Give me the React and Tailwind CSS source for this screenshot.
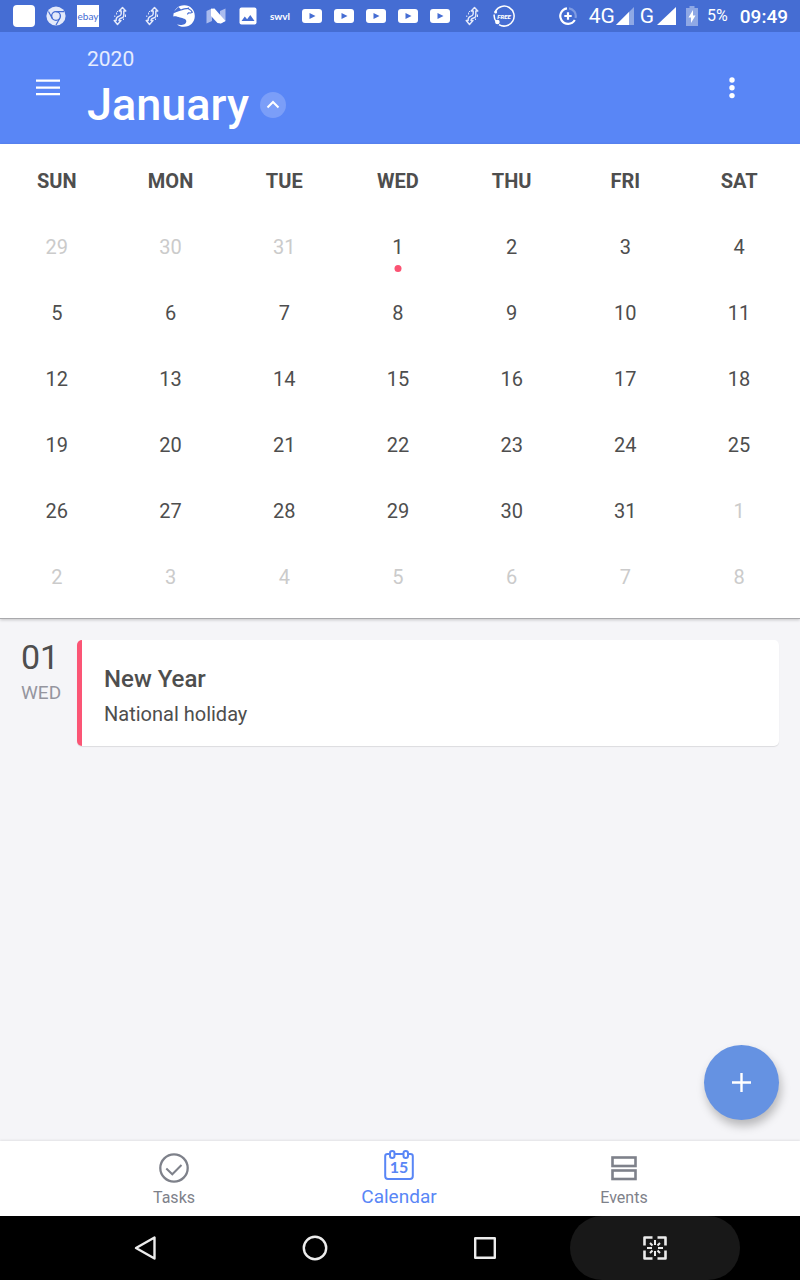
import React from "react";

const WEEKDAYS = ["SUN", "MON", "TUE", "WED", "THU", "FRI", "SAT"];
const WEEKS = [
  [29, 30, 31, 1, 2, 3, 4],
  [5, 6, 7, 8, 9, 10, 11],
  [12, 13, 14, 15, 16, 17, 18],
  [19, 20, 21, 22, 23, 24, 25],
  [26, 27, 28, 29, 30, 31, 1],
  [2, 3, 4, 5, 6, 7, 8],
];

function isOutside(week, day) {
  return (week === 0 && day > 20) || (week > 3 && day < 20);
}

function Slot({ children }) {
  return <span className="flex h-8 w-8 shrink-0 items-center justify-center">{children}</span>;
}

function ChromeIcon() {
  return (
    <svg width="20" height="20" viewBox="0 0 20 20" aria-hidden="true">
      <circle cx="10" cy="10" r="9.6" fill="#e3e9fa" />
      <circle cx="10" cy="10" r="4.4" fill="#e3e9fa" stroke="#456dd3" strokeWidth="1.4" />
      <path d="M10 5.600H18M6.200 12.200L2.500 5.500M13.800 12.200L10 19" stroke="#456dd3" strokeWidth="1.2" fill="none" />
    </svg>
  );
}

function TransferIcon() {
  return (
    <svg width="14" height="20" viewBox="0 0 14 20" fill="none" stroke="#e4eafb" strokeWidth="1.400" strokeLinejoin="round" aria-hidden="true">
      <path d="M9.500 1.500L12.800 5H10.800V9.500Q10.800 11.500 8.500 12T6 14V14.500H8L4.500 18.500L1.200 14.500H3.200V13.500Q3.200 11 5.600 10.300T8.200 8V5H6.200z" />
      <path d="M3.600 6.500v2M1.800 9.500v1.500M10.500 12.500v1.500M12.500 8.500v2.500M4.500 5v1" strokeWidth="1" />
    </svg>
  );
}

function CatIcon() {
  return (
    <svg width="22" height="22" viewBox="0 0 22 22" aria-hidden="true">
      <path d="M0.300 11.500C0.300 5 5 .2 11.300.2C17.500.2 21.800 5 21.800 11C21.800 17 17.200 21.800 11 21.800C8 21.800 5.800 21 4 19.500C8 20.500 13 20 13.300 16.500C13.500 13.800 10 13.500 7 12.600C4.500 11.800 2.500 10.800.3 11.500z" fill="#fff" />
      <path d="M1 7.500C3.500 5.800 6 5.600 9 4.600C11 3.800 12.600 3.400 14.200 3.700L15.300 3L16 4.300C17.500 4.900 18.600 5.800 19.300 7.200L17.800 8L15.500 7.800L14.300 9.300" fill="none" stroke="#456dd3" strokeWidth="1.200" />
      <path d="M0 7.500L5.500 2L8 4.500L2.500 7z" fill="#456dd3" />
    </svg>
  );
}

function NIcon() {
  return (
    <svg width="20" height="16" viewBox="0 0 20 16" aria-hidden="true">
      <path d="M0.500 3L6 0.500V13L0.500 15.500zM14 3L19.500 0.500V13L14 15.500z" fill="#a9bbee" />
      <path d="M5 0.800L8.500 0.500L19.500 13L15 15.500L11.500 15L5 8z" fill="#fff" />
    </svg>
  );
}

function PictureIcon() {
  return (
    <svg width="18" height="18" viewBox="0 0 18 18" aria-hidden="true">
      <rect x="0.500" y="0.500" width="17" height="17" rx="2" fill="#fff" />
      <path d="M2.500 14l3.300-4.500 2.300 2.700 3.200-4.300L15.500 14z" fill="#456dd3" />
    </svg>
  );
}

function VideoIcon() {
  return (
    <svg width="20" height="14" viewBox="0 0 20 14" aria-hidden="true">
      <rect width="20" height="14" rx="3" fill="#fff" />
      <path d="M7.500 4l6 3-6 3z" fill="#456dd3" />
    </svg>
  );
}

function FreeIcon() {
  return (
    <svg width="22" height="22" viewBox="0 0 22 22" fill="none" stroke="#fff" strokeWidth="1.500" aria-hidden="true">
      <path d="M2.500 6A10 10 0 1 1 6 19.700M1.200 9.500A10 10 0 0 0 3.500 17" />
      <circle cx="2.600" cy="7" r="1.500" fill="#fff" stroke="none" />
      <circle cx="4.400" cy="17" r="2.300" fill="#fff" stroke="none" />
      <text x="11" y="13.500" textAnchor="middle" fill="#fff" stroke="none" fontFamily="Roboto, sans-serif" fontSize="6" fontStyle="italic" fontWeight="900">FREE</text>
    </svg>
  );
}

function StatusBar() {
  return (
    <div className="flex h-8 items-center justify-between overflow-hidden bg-[#456dd3] pl-2 pr-3 text-white">
      <div className="flex">
        <Slot><span className="h-[22px] w-[22px] rounded bg-white" /></Slot>
        <Slot><ChromeIcon /></Slot>
        <Slot>
          <span className="flex h-[22px] w-[22px] items-center justify-center bg-white font-[Lato,sans-serif] text-[10px] leading-none text-[#456dd3]">ebay</span>
        </Slot>
        <Slot><TransferIcon /></Slot>
        <Slot><TransferIcon /></Slot>
        <Slot><CatIcon /></Slot>
        <Slot><NIcon /></Slot>
        <Slot><PictureIcon /></Slot>
        <Slot><span className="font-[Lato,sans-serif] text-[10px] font-bold leading-none">swvl</span></Slot>
        <Slot><VideoIcon /></Slot>
        <Slot><VideoIcon /></Slot>
        <Slot><VideoIcon /></Slot>
        <Slot><VideoIcon /></Slot>
        <Slot><VideoIcon /></Slot>
        <Slot><TransferIcon /></Slot>
        <Slot><FreeIcon /></Slot>
      </div>
      <div className="flex items-center leading-none">
        <svg className="mr-3" width="18" height="18" viewBox="0 0 18 18" fill="none" strokeWidth="2.200" aria-hidden="true">
          <path d="M10 1.300A7.800 7.800 0 0 1 16.500 11" stroke="#7f9be2" />
          <path d="M8 1.300A7.800 7.800 0 1 0 15.800 13" stroke="#fff" />
          <path d="M9 5.300v7.400M5.300 9h7.400" stroke="#fff" />
        </svg>
        <span className="mr-px text-[21px] leading-none">4G</span>
        <svg className="mr-[6px]" width="18" height="18" viewBox="0 0 18 18" aria-hidden="true">
          <path d="M0 18L18 0v18z" fill="#8fa8e5" />
          <path d="M0 18L13 5v13z" fill="#fff" />
        </svg>
        <span className="mr-[3px] text-[21px] leading-none">G</span>
        <svg className="mr-[10px]" width="19" height="18" viewBox="0 0 19 18" aria-hidden="true">
          <path d="M0 18L19 0v18z" fill="#fff" />
        </svg>
        <svg className="mr-[9px]" width="12" height="20" viewBox="0 0 12 20" aria-hidden="true">
          <path d="M0 2h3.500V0h5v2H12v18H0z" fill="#8fa8e5" />
          <path d="M7 4L2.500 11.500H5V17l4.500-7.500H7z" fill="#fff" />
        </svg>
        <span className="mr-3 text-base leading-none">5%</span>
        <span className="text-[19px] font-medium leading-none">09:49</span>
      </div>
    </div>
  );
}

function Header() {
  return (
    <header className="flex h-28 bg-[#5986f6] pl-9 pr-14 text-white">
      <button type="button" aria-label="Open menu" className="mt-11 h-6 w-6">
        <svg width="24" height="24" viewBox="0 0 24 24" fill="#fff" aria-hidden="true">
          <path d="M0 3.500h24v2.200H0zM0 10.500h24v2.200H0zM0 17h24v2.200H0z" />
        </svg>
      </button>
      <div className="ml-[27px] flex-1 pt-[14px]">
        <p className="text-[21px] leading-[26px] text-white/85">2020</p>
        <div className="mt-[5px] flex items-center gap-[11px]">
          <h1 className="text-[45px] font-medium leading-[56px]">January</h1>
          <button type="button" aria-label="Collapse month" className="flex h-[26px] w-[26px] items-center justify-center rounded-full bg-[#7b9ef8]">
            <svg width="14" height="14" viewBox="0 0 14 14" fill="none" stroke="#fff" strokeWidth="2" aria-hidden="true">
              <path d="M1.500 9.500L7 4l5.500 5.500" />
            </svg>
          </button>
        </div>
      </div>
      <button type="button" aria-label="More options" className="mt-11 flex h-6 w-6 items-center justify-center">
        <svg width="6" height="22" viewBox="0 0 6 22" fill="#fff" aria-hidden="true">
          <circle cx="3" cy="3" r="2.700" />
          <circle cx="3" cy="10.800" r="2.700" />
          <circle cx="3" cy="18.600" r="2.700" />
        </svg>
      </button>
    </header>
  );
}

function MonthGrid() {
  return (
    <section aria-label="January 2020" className="z-10 border-b border-[#a9a9ac] bg-white pb-2 pr-1 pt-1 shadow-[0_1px_3px_rgba(0,0,0,0.2)]">
      <table className="w-full table-fixed border-collapse text-center text-xl text-[#4e4e4e]">
        <thead>
          <tr className="h-[66px]">
            {WEEKDAYS.map((name) => (
              <th key={name} scope="col" className="p-0 font-bold">{name}</th>
            ))}
          </tr>
        </thead>
        <tbody>
          {WEEKS.map((days, week) => (
            <tr key={week} className="h-[66px]">
              {days.map((day) => (
                <td key={day} className={isOutside(week, day) ? "p-0 text-[#cbcbcb]" : "p-0"}>
                  <button type="button" className="relative h-11 w-11">
                    {day}
                    {week === 0 && day === 1 && (
                      <span className="absolute bottom-[-3px] left-1/2 h-[7px] w-[7px] -translate-x-1/2 rounded-full bg-[#fb5373]" />
                    )}
                  </button>
                </td>
              ))}
            </tr>
          ))}
        </tbody>
      </table>
    </section>
  );
}

function Agenda() {
  return (
    <main className="relative flex-1 bg-[#f5f5f8] px-[21px] pt-[21px]">
      <article className="flex">
        <div className="w-14">
          <p className="text-[34px] leading-[34px] text-[#4e4e4e]">01</p>
          <p className="mt-[6px] text-[19px] leading-[26px] text-[#95959f]">WED</p>
        </div>
        <div className="flex-1 rounded-[5px] border-l-[5px] border-[#fb5575] bg-white pb-[19px] pl-[22px] pt-6 text-[#4e4e4e] shadow-[0_1px_1px_rgba(0,0,0,0.1)]">
          <h2 className="text-2xl font-medium leading-[30px]">New Year</h2>
          <p className="mt-[7px] text-xl leading-[26px]">National holiday</p>
        </div>
      </article>
      <button type="button" aria-label="Add event" className="absolute bottom-[21px] right-[21px] flex h-[75px] w-[75px] items-center justify-center rounded-full bg-[#6592e2] shadow-[2px_6px_10px_rgba(0,0,0,0.25)]">
        <svg width="20" height="20" viewBox="0 0 20 20" stroke="#fff" strokeWidth="2.400" aria-hidden="true">
          <path d="M9.500 0v19M0 9.500h19" />
        </svg>
      </button>
    </main>
  );
}

function TabBar() {
  return (
    <nav aria-label="Sections" className="relative flex h-[75px] justify-center bg-white pr-[2px] text-[#7e818a] shadow-[0_-1px_2px_rgba(0,0,0,0.08)]">
      <a href="#tasks" className="flex w-[225px] flex-col items-center pt-3">
        <svg width="30" height="30" viewBox="0 0 30 30" fill="none" stroke="currentColor" aria-hidden="true">
          <circle cx="15" cy="15" r="13.700" strokeWidth="2.300" />
          <path d="M7.300 15.500l6 5.800L22.500 12" strokeWidth="2" />
        </svg>
        <span className="mt-[5px] text-base leading-5">Tasks</span>
      </a>
      <a href="#calendar" aria-current="page" className="flex w-[225px] flex-col items-center pt-2 text-[#5986f6]">
        <svg width="30" height="32" viewBox="0 0 30 32" fill="none" stroke="currentColor" strokeWidth="2" aria-hidden="true">
          <path d="M5.500 5H3.500Q1.200 5 1.200 7.300V27Q1.200 30 4 30H26Q28.800 30 28.800 27V7.300Q28.800 5 26.500 5H24.500M11 5h8" />
          <rect x="6" y="2" width="4.500" height="7" rx="2.200" />
          <rect x="19.500" y="2" width="4.500" height="7" rx="2.200" />
          <text x="15" y="23.500" textAnchor="middle" fill="currentColor" stroke="none" fontFamily="Lato, sans-serif" fontSize="16" fontWeight="700">15</text>
        </svg>
        <span className="mt-1 text-[19px] leading-6">Calendar</span>
      </a>
      <a href="#events" className="flex w-[225px] flex-col items-center pt-3">
        <svg width="26" height="30" viewBox="0 0 26 30" fill="none" stroke="currentColor" strokeWidth="2.600" aria-hidden="true">
          <rect x="1.500" y="4.500" width="23" height="8.500" />
          <rect x="1.500" y="17.500" width="23" height="8.500" />
        </svg>
        <span className="mt-[5px] text-base leading-5">Events</span>
      </a>
    </nav>
  );
}

function SystemNav() {
  return (
    <div className="flex h-16 justify-center bg-black text-[#ececec]">
      <button type="button" aria-label="Back" className="flex w-[170px] items-center justify-center">
        <svg width="22" height="26" viewBox="0 0 22 26" fill="none" stroke="currentColor" strokeWidth="2.400" strokeLinejoin="round" aria-hidden="true">
          <path d="M20.500 2.500v21L2 13z" />
        </svg>
      </button>
      <button type="button" aria-label="Home" className="flex w-[170px] items-center justify-center">
        <svg width="26" height="26" viewBox="0 0 26 26" fill="none" stroke="currentColor" strokeWidth="2.400" aria-hidden="true">
          <circle cx="13" cy="13" r="11.200" />
        </svg>
      </button>
      <button type="button" aria-label="Recent apps" className="flex w-[170px] items-center justify-center">
        <svg width="24" height="24" viewBox="0 0 24 24" fill="none" stroke="currentColor" strokeWidth="2.400" strokeLinejoin="round" aria-hidden="true">
          <rect x="2.200" y="2.200" width="19.600" height="19.600" />
        </svg>
      </button>
      <button type="button" aria-label="Capture screen" className="flex w-[170px] items-center justify-center rounded-full bg-[#181818]">
        <svg width="24" height="24" viewBox="0 0 24 24" fill="none" stroke="currentColor" strokeWidth="2.600" aria-hidden="true">
          <path d="M1.500 9.500V1.500h8M14.500 1.500h8v8M22.500 14.500v8h-8M9.500 22.500h-8v-8" strokeLinejoin="round" />
          <path d="M12 4v5M12 15v5M4 12h5M15 12h5M7 7l2.500 2.500M14.500 14.500L17 17M17 7l-2.500 2.500M9.500 14.500L7 17" strokeWidth="2" />
        </svg>
      </button>
    </div>
  );
}

export default function App() {
  return (
    <div className="flex min-h-screen flex-col font-[Roboto,sans-serif]">
      <StatusBar />
      <Header />
      <MonthGrid />
      <Agenda />
      <TabBar />
      <SystemNav />
    </div>
  );
}
